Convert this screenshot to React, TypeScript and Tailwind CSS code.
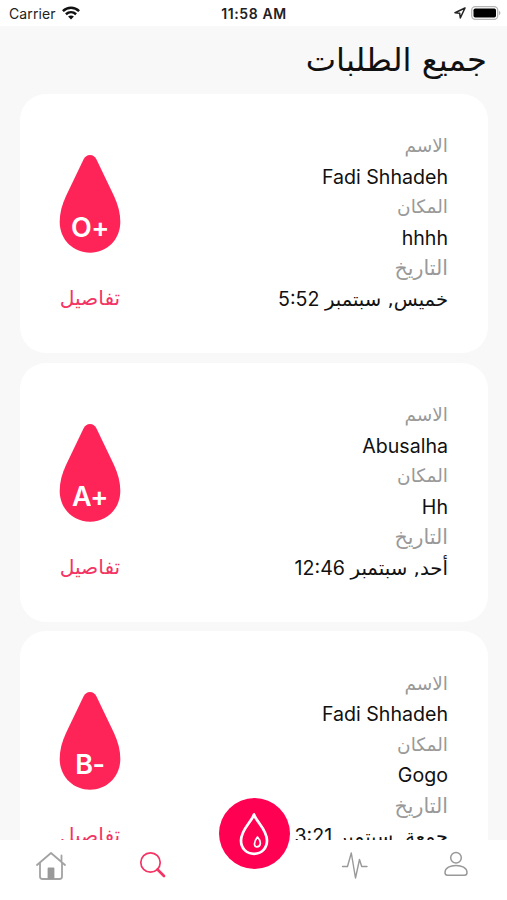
import type { ReactNode } from "react";

type Request = {
  type: string;
  name: string;
  place: string;
  day: string;
  daySize: string;
  time: string;
};

const requests: Request[] = [
  { type: "O+", name: "Fadi Shhadeh", place: "hhhh", day: "خميس, سبتمبر", daySize: "text-[19.6px]", time: "5:52" },
  { type: "A+", name: "Abusalha", place: "Hh", day: "أحد, سبتمبر", daySize: "text-[19.8px]", time: "12:46" },
  { type: "B-", name: "Fadi Shhadeh", place: "Gogo", day: "جمعة, سبتمبر", daySize: "text-[19.3px]", time: "3:21" },
];

const arabic = "font-['DejaVu_Sans',sans-serif]";

function Label({ children, size = "text-[18.5px]" }: { children: ReactNode; size?: string }) {
  return <div className={`${arabic} ${size} h-[30.5px] text-[#999999]`}>{children}</div>;
}

function RequestCard({ request }: { request: Request }) {
  return (
    <article className="flex h-[259px] shrink-0 justify-between rounded-[26px] bg-white pr-10 pl-[39px]">
      <div className="flex w-[62px] flex-col items-center pt-[60px]">
        <div className="relative h-[100px] w-[62px]">
          <svg viewBox="0 0 62 100" className="size-full" fill="#ff2458">
            <path d="M31 1C28 1 26 2.700 24.500 5.500L7 42C3 50.500 .7 59 .7 68C.7 85.500 14 98.700 31 98.700S61.300 85.500 61.300 68C61.300 59 59 50.500 55 42L37.500 5.500C36 2.700 34 1 31 1Z" />
          </svg>
          <span className="absolute inset-x-0 top-[59px] text-center text-[27px] leading-[30px] font-semibold tracking-[-0.5px] text-white [font-feature-settings:'calt'_0]">
            {request.type}
          </span>
        </div>
        <a className={`${arabic} mt-[29px] text-[20.2px] leading-[30px] whitespace-nowrap text-[#f43464]`} dir="rtl">
          تفاصيل
        </a>
      </div>
      <div dir="rtl" className="pt-[37.4px] text-[19.6px] leading-[30.5px] whitespace-nowrap text-[#111111]">
        <Label>الاسم</Label>
        <div className="h-[30.5px]">{request.name}</div>
        <Label>المكان</Label>
        <div className="h-[30.5px]">{request.place}</div>
        <Label size="text-[20.6px]">التاريخ</Label>
        <div className="h-[30.5px]">
          <span className={`${arabic} ${request.daySize}`}>{request.day}</span> {request.time}
        </div>
      </div>
    </article>
  );
}

function StatusBar() {
  return (
    <header className="grid h-[26px] shrink-0 grid-cols-3 items-center bg-white pr-[6px] pl-[9px] text-[14px] text-[#222222]">
      <div className="flex items-center gap-[6px]">
        <span className="tracking-[0.1px]">Carrier</span>
        <svg viewBox="0 0 18 14" className="h-[14px] w-[18px]" fill="none" stroke="#111" strokeWidth="2.500">
          <path d="M.9 5.200C5.600 .7 12.400 .7 17.100 5.200M3.900 8.300C6.900 5.600 11.100 5.600 14.100 8.300" />
          <path d="M9 13.600L6.100 10.500C7.700 9.100 10.300 9.100 11.900 10.500Z" fill="#111" stroke="none" />
        </svg>
      </div>
      <div className="pt-px pr-[2px] text-center text-[14px] font-semibold tracking-[0.6px] whitespace-nowrap">11:58 AM</div>
      <div className="flex items-center justify-end gap-[5px]">
        <svg viewBox="0 0 12 12" className="size-3" fill="none" stroke="#222" strokeWidth="1.500" strokeLinejoin="round">
          <path d="M11 1L1 5.800L5.700 6.300L6.300 11Z" />
        </svg>
        <svg viewBox="0 0 30 14" className="h-[14px] w-[30px]">
          <rect x=".7" y=".7" width="26" height="12.600" rx="3.500" fill="#fff" stroke="#b5b5b5" strokeWidth="1.300" />
          <rect x="2.500" y="2.500" width="22.500" height="9" rx="1.700" fill="#000" />
          <path d="M28 4.800Q31 7 28 9.200Z" fill="#b5b5b5" />
        </svg>
      </div>
    </header>
  );
}

function TabBar() {
  return (
    <nav className="relative grid h-[60px] shrink-0 grid-cols-5 justify-items-center bg-white pt-[11px]">
      <svg viewBox="0 0 30 30" className="size-[30px]" fill="none" stroke="#a3a3a3" strokeWidth="1.800" strokeLinecap="round" strokeLinejoin="round">
        <path d="M1 14L15 2L29 14M4 12V25.500Q4 28 6.500 28H23.500Q26 28 26 25.500V12M25.500 10V4.500" />
        <path d="M12.500 17.500H17.500V27H12.500Z" fill="#999" stroke="#999" />
      </svg>
      <svg viewBox="0 0 30 30" className="size-[30px]" fill="none" stroke="#f43464" strokeLinecap="round">
        <circle cx="13.500" cy="11.500" r="9.700" strokeWidth="1.700" />
        <path d="M20.500 18.500L27 25" strokeWidth="2.700" />
      </svg>
      <button className="absolute top-[-42px] left-[218.500px] flex size-[71px] items-center justify-center rounded-full bg-[#ff0052]">
        <svg viewBox="0 0 30 44" className="h-11 w-[30px]" fill="none" stroke="#fff" strokeWidth="2.700" strokeLinejoin="round">
          <path d="M15 2.500C12.500 10 2 17.500 2 28.500C2 36.500 7.500 41.800 15 41.800S28 36.500 28 28.500C28 17.500 17.500 10 15 2.500Z" />
          <path d="M18.500 25C15 29.500 14.500 34.500 17.500 34.800C22 35 22.800 29.500 18.500 25Z" strokeWidth="1.700" />
        </svg>
      </button>
      <svg viewBox="0 0 30 30" className="col-start-4 size-[30px]" fill="none" stroke="#999" strokeWidth="1.400" strokeLinecap="round" strokeLinejoin="round">
        <path d="M2.500 15.500H7.500L11.300 2L15.500 27L19.500 8.500L21.700 15.500H27" />
      </svg>
      <svg viewBox="0 0 30 30" className="size-[30px]" fill="none" stroke="#999" strokeWidth="1.500">
        <circle cx="15" cy="6.800" r="5.300" />
        <path d="M4 21.500C4 12 26 12 26 21.500Q26 24.300 23.500 24.300H6.500Q4 24.300 4 21.500Z" />
      </svg>
    </nav>
  );
}

export default function App() {
  return (
    <div className="flex h-[900px] w-[507px] flex-col overflow-hidden bg-[#f8f8f8] font-[Inter,sans-serif]">
      <StatusBar />
      <main className="flex min-h-0 flex-1 flex-col overflow-hidden pr-[19px] pl-5">
        <h1 dir="rtl" className={`${arabic} h-[68px] shrink-0 pr-px text-[32.2px] leading-[68px] whitespace-nowrap text-[#111111]`}>
          جميع الطلبات
        </h1>
        <div className="flex flex-col gap-[9.700px]">
          {requests.map((request, index) => (
            <RequestCard key={index} request={request} />
          ))}
        </div>
      </main>
      <TabBar />
    </div>
  );
}
